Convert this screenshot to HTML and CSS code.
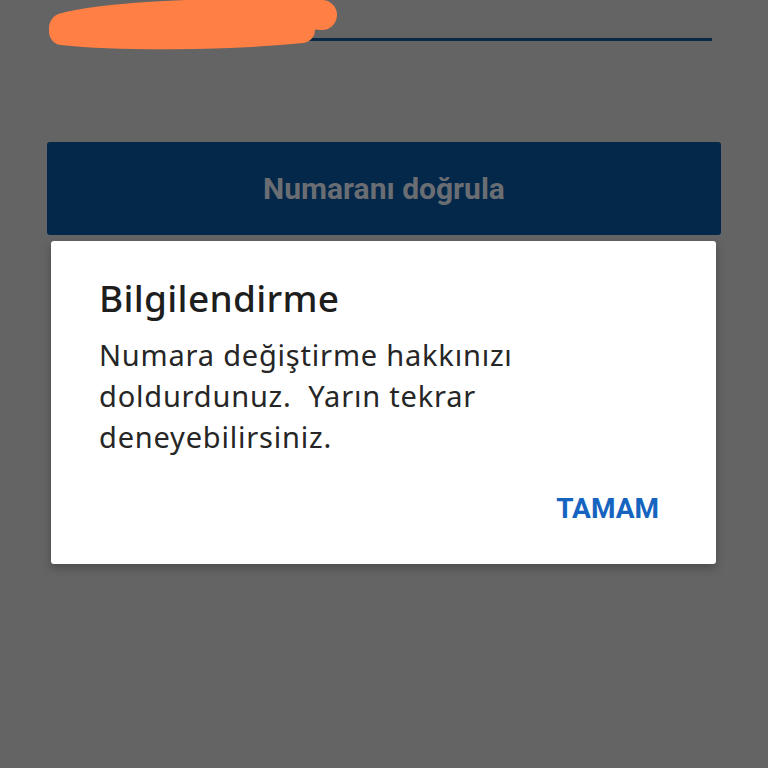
FILE: index.html
```html
<!DOCTYPE html>
<html lang="tr">
<head>
<meta charset="utf-8">
<link rel="stylesheet" href="styles.css">
</head>
<body>
<div class="screen">
  <div class="field">
    <div class="field-line"></div>
    <svg class="scribble" width="310" height="60" viewBox="0 0 310 60">
      <path d="M24 30 C 60 20, 150 14, 270 16 L 282 17" stroke="#ff7f45" stroke-width="30" stroke-linecap="round" fill="none"/>
      <path d="M22 34 C 80 40, 180 40, 262 32" stroke="#ff7f45" stroke-width="26" stroke-linecap="round" fill="none"/>
    </svg>
  </div>
  <button class="verify">Numaranı doğrula</button>
  <div class="dialog">
    <h2 class="dialog-title">Bilgilendirme</h2>
    <p class="dialog-text">Numara değiştirme hakkınızı doldurdunuz.&nbsp; Yarın tekrar deneyebilirsiniz.</p>
    <div class="dialog-actions"><span class="ok">TAMAM</span></div>
  </div>
</div>
</body>
</html>
```
FILE: styles.css
```css
html, body {
  margin: 0;
  padding: 0;
  background: #646464;
}
.screen {
  position: relative;
  width: 768px;
  height: 768px;
  overflow: hidden;
  font-family: "Noto Sans", Roboto, sans-serif;
}
.field {
  position: relative;
  height: 42px;
  margin: 0 56px 0 250px;
}
.field-line {
  position: absolute;
  left: 0;
  right: 0;
  top: 38px;
  height: 3px;
  background: #0a2845;
}
.scribble {
  position: absolute;
  left: -210px;
  top: -2px;
}
.verify {
  display: block;
  margin: 100px 47px 0 47px;
  width: 674px;
  height: 93px;
  border: none;
  border-radius: 3px;
  background: #04284a;
  color: #6a6e73;
  font-family: Roboto, "Noto Sans", sans-serif;
  font-weight: 700;
  font-size: 30px;
  padding: 0;
}
.dialog {
  position: absolute;
  left: 51px;
  top: 241px;
  width: 665px;
  height: 323px;
  box-sizing: border-box;
  background: #ffffff;
  border-radius: 3px;
  padding: 0 48px;
  box-shadow: 0 4px 10px rgba(0,0,0,0.25);
}
.dialog-title {
  margin: 35px 0 0 0;
  font-size: 37px;
  line-height: 44px;
  font-weight: 500;
  letter-spacing: 0.3px;
  color: #1e1e1e;
}
.dialog-text {
  margin: 14px 0 0 0;
  font-size: 29px;
  line-height: 41px;
  letter-spacing: 0.8px;
  color: #262626;
  width: 470px;
}
.dialog-actions {
  display: flex;
  justify-content: flex-end;
  margin-top: 35px;
  padding-right: 9px;
}
.ok {
  color: #1565c0;
  font-weight: 700;
  font-size: 28px;
  font-family: Roboto, "Liberation Sans", sans-serif;
}
```
